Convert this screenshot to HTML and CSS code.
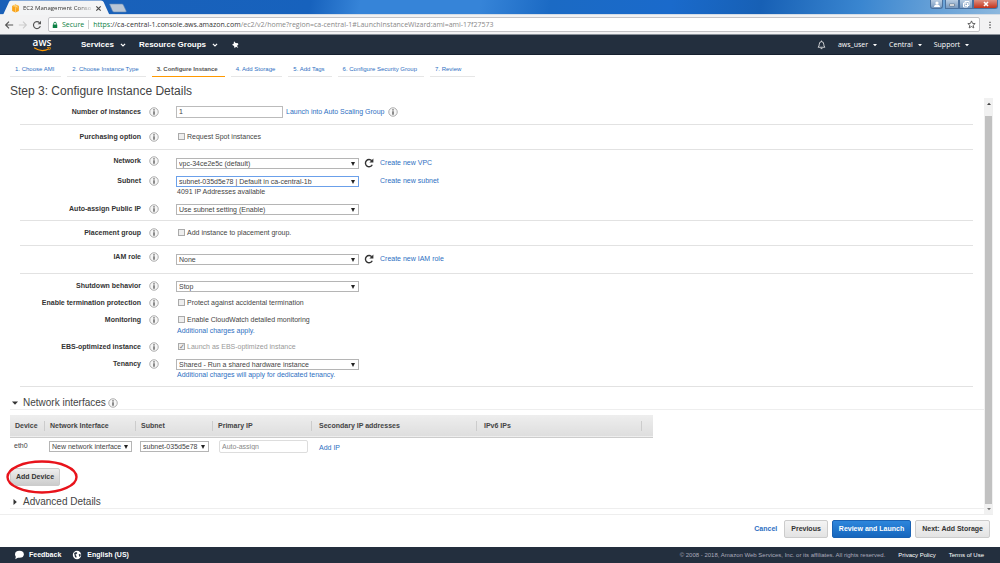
FILE: index.html
```html
<!DOCTYPE html>
<html lang="en">
<head>
<meta charset="utf-8">
<title>EC2 Management Console</title>
<link rel="stylesheet" href="styles.css">
</head>
<body>
<svg class="defs" width="0" height="0" aria-hidden="true">
  <symbol id="info" viewBox="0 0 20 20"><circle cx="10" cy="10" r="8.500" fill="#f6f6f6" stroke="#999" stroke-width="1.600"/><path d="M10 4.600v2.400M10 8.600v7" stroke="#444" stroke-width="2.400"/></symbol>
  <symbol id="reload" viewBox="0 0 20 20"><path d="M16.500 13.600A7.200 7.200 0 1 1 15.600 5.600" fill="none" stroke="#333" stroke-width="2.800"/><path d="M18.800 1v8h-8z" fill="#333"/></symbol>
  <symbol id="chevron" viewBox="0 0 10 10"><path d="M1.500 3l3.500 3.500L8.500 3" fill="none" stroke="#fff" stroke-width="2"/></symbol>
  <symbol id="caret" viewBox="0 0 10 10"><path d="M0 2.500h10L5 8z" fill="currentColor"/></symbol>
</svg>

<div class="tabstrip">
  <svg class="tab-shape" viewBox="0 0 130 15" aria-hidden="true">
    <path d="M3 15L9 2Q9.500 .5 11 .5H101Q103 .5 103.600 2L109.500 15z" fill="#f3f4f5"/>
    <path d="M109.500 4h12.500q1 0 1.400 1l2.800 6q.4 1-.8 1H114q-1 0-1.500-1l-2.600-6q-.4-1-.4-1z" fill="#b9c6d6" stroke="#5f86b5" stroke-width=".6"/>
  </svg>
  <div class="tab">
    <svg class="tab-icon" viewBox="0 0 16 16" aria-hidden="true"><path d="M8 1l6 2.500v9L8 15l-6-2.500v-9z" fill="#f9a41a"/><path d="M8 1l6 2.500L8 6 2 3.500z" fill="#fdc24f"/><path d="M8 6v9M4.800 2.200l6 2.500v3" stroke="#fde3b0" stroke-width="1" fill="none"/></svg>
    <span class="tab-title">EC2 Management Conso</span>
    <button class="tab-close" aria-label="Close tab"><svg viewBox="0 0 8 8"><path d="M1.500 1.500l5 5M6.500 1.500l-5 5" stroke="#444" stroke-width="1.300"/></svg></button>
  </div>
  <div class="win">
    <button class="win-btn win-user" aria-label="Profile"><svg viewBox="0 0 12 8"><circle cx="6" cy="3" r="1.600" fill="#fff"/><path d="M3 7q0-2.500 3-2.500T9 7z" fill="#fff"/></svg></button>
    <button class="win-btn" aria-label="Minimize"><svg viewBox="0 0 12 8"><path d="M3.500 4h5v2h-5z" fill="#fff" stroke="#456" stroke-width=".5"/></svg></button>
    <button class="win-btn" aria-label="Restore"><svg viewBox="0 0 12 8"><path d="M5 1.500h4v4H5zM3.500 3h4v4h-4z" fill="#8aa5c6" stroke="#fff" stroke-width="1"/></svg></button>
    <button class="win-btn win-close" aria-label="Close"><svg viewBox="0 0 12 8"><path d="M4 2l4 4M8 2L4 6" stroke="#fff" stroke-width="1.600"/></svg></button>
  </div>
</div>

<div class="toolbar">
  <button class="tool" aria-label="Back"><svg viewBox="0 0 12 12"><path d="M11 6H2M6 2L2 6l4 4" fill="none" stroke="#555" stroke-width="1.400"/></svg></button>
  <button class="tool" aria-label="Forward"><svg viewBox="0 0 12 12"><path d="M1 6h9M6 2l4 4-4 4" fill="none" stroke="#ccc" stroke-width="1.400"/></svg></button>
  <button class="tool" aria-label="Reload"><svg viewBox="0 0 12 12"><path d="M10 7.300A4.200 4.200 0 1 1 9 3.200" fill="none" stroke="#555" stroke-width="1.400"/><path d="M10.800 1v4H6.800z" fill="#555"/></svg></button>
  <div class="address">
    <svg class="lock" viewBox="0 0 8 10" aria-hidden="true"><path d="M1 4.500h6V9H1z" fill="#0b8043"/><path d="M2.300 5V3a1.700 1.700 0 0 1 3.400 0v2" fill="none" stroke="#0b8043" stroke-width="1.200"/></svg>
    <span class="secure">Secure</span>
    <span class="url"><span class="scheme">https</span><span class="host">://ca-central-1.console.aws.amazon.com</span>/ec2/v2/home?region=ca-central-1#LaunchInstanceWizard:ami=ami-17f27573</span>
    <svg class="star" viewBox="0 0 12 12" aria-hidden="true"><path d="M6 1.200l1.400 3.300 3.500.3-2.700 2.300.9 3.500L6 8.700l-3.100 1.900.9-3.500L1.100 4.800l3.500-.3z" fill="none" stroke="#555" stroke-width="1.200"/></svg>
  </div>
  <button class="tool menu" aria-label="Menu"><svg viewBox="0 0 12 12"><path d="M5.200 2h1.600v1.600H5.200zM5.200 5.200h1.600v1.600H5.200zM5.200 8.400h1.600V10H5.200z" fill="#555"/></svg></button>
</div>

<header class="nav">
  <a class="logo" href="#" aria-label="aws">
    <span>aws</span>
    <svg viewBox="0 0 22 6" aria-hidden="true"><path d="M1 1q9 6 18 1" fill="none" stroke="#f90" stroke-width="1.400"/><path d="M16.500.8q3-1 4 0 .2 1.500-1.300 3" fill="none" stroke="#f90" stroke-width="1"/></svg>
  </a>
  <nav class="nav-main">
    <button class="nav-btn">Services <svg><use href="#chevron"/></svg></button>
    <button class="nav-btn">Resource Groups <svg><use href="#chevron"/></svg></button>
    <button class="pin" aria-label="Pin shortcuts"><svg viewBox="0 0 12 12"><path d="M4.500 .500l2.500 2.500 3.500 .5 .5 2-2 1.500 2 3.500-3.500-2L5.500 11 4.500 7.500 1.500 5.500 4 4z" fill="#fff"/></svg></button>
  </nav>
  <div class="nav-side">
    <button class="bell" aria-label="Alerts"><svg viewBox="0 0 12 13"><path d="M1.500 9.500Q3 8 3 5.500 3 2 6 2t3 3.500q0 2.500 1.500 4zM6 .6V2M4.800 11.300h2.400" fill="none" stroke="#eee" stroke-width="1.100"/></svg></button>
    <button class="side-btn">aws_user <svg><use href="#caret"/></svg></button>
    <button class="side-btn">Central <svg><use href="#caret"/></svg></button>
    <button class="side-btn">Support <svg><use href="#caret"/></svg></button>
  </div>
</header>

<nav class="steps">
  <a href="#">1. Choose AMI</a>
  <a href="#">2. Choose Instance Type</a>
  <a href="#" class="current">3. Configure Instance</a>
  <a href="#">4. Add Storage</a>
  <a href="#">5. Add Tags</a>
  <a href="#">6. Configure Security Group</a>
  <a href="#">7. Review</a>
</nav>
<h1>Step 3: Configure Instance Details</h1>

<main class="pane">
  <div class="content">
    <form class="form">
      <section class="group first">
        <div class="row">
          <label for="count">Number of instances</label><svg class="info"><use href="#info"/></svg>
          <div class="field"><input class="text count" id="count" value="1"><a href="#">Launch into Auto Scaling Group</a><svg class="info"><use href="#info"/></svg></div>
        </div>
      </section>
      <section class="group">
        <div class="row">
          <span class="name">Purchasing option</span><svg class="info"><use href="#info"/></svg>
          <label class="check"><input type="checkbox">Request Spot instances</label>
        </div>
      </section>
      <section class="group network">
        <div class="row low">
          <label for="network">Network</label><svg class="info"><use href="#info"/></svg>
          <div class="field"><span class="select"><select id="network"><option>vpc-34ce2e5c (default)</option></select></span><button type="button" class="refresh" aria-label="Refresh networks"><svg><use href="#reload"/></svg></button><a href="#">Create new VPC</a></div>
        </div>
        <div class="row">
          <label for="subnet">Subnet</label><svg class="info"><use href="#info"/></svg>
          <div class="field"><span class="select focused"><select id="subnet"><option>subnet-035d5e78 | Default in ca-central-1b</option></select></span><span class="refresh"></span><a href="#">Create new subnet</a></div>
          <p class="hint">4091 IP Addresses available</p>
        </div>
        <div class="row">
          <label for="autoip">Auto-assign Public IP</label><svg class="info"><use href="#info"/></svg>
          <div class="field"><span class="select"><select id="autoip"><option>Use subnet setting (Enable)</option></select></span></div>
        </div>
      </section>
      <section class="group">
        <div class="row">
          <span class="name">Placement group</span><svg class="info"><use href="#info"/></svg>
          <label class="check"><input type="checkbox">Add instance to placement group.</label>
        </div>
      </section>
      <section class="group role">
        <div class="row low">
          <label for="iam">IAM role</label><svg class="info"><use href="#info"/></svg>
          <div class="field"><span class="select"><select id="iam"><option>None</option></select></span><button type="button" class="refresh" aria-label="Refresh roles"><svg><use href="#reload"/></svg></button><a href="#">Create new IAM role</a></div>
        </div>
      </section>
      <section class="group tight">
        <div class="row">
          <label for="shutdown">Shutdown behavior</label><svg class="info"><use href="#info"/></svg>
          <div class="field"><span class="select"><select id="shutdown"><option>Stop</option></select></span></div>
        </div>
        <div class="row">
          <span class="name">Enable termination protection</span><svg class="info"><use href="#info"/></svg>
          <label class="check"><input type="checkbox">Protect against accidental termination</label>
        </div>
        <div class="row">
          <span class="name">Monitoring</span><svg class="info"><use href="#info"/></svg>
          <label class="check"><input type="checkbox">Enable CloudWatch detailed monitoring</label>
          <p class="hint"><a href="#">Additional charges apply.</a></p>
        </div>
        <div class="row">
          <span class="name">EBS-optimized instance</span><svg class="info"><use href="#info"/></svg>
          <label class="check off"><input type="checkbox" checked disabled>Launch as EBS-optimized instance</label>
        </div>
        <div class="row">
          <label for="tenancy">Tenancy</label><svg class="info"><use href="#info"/></svg>
          <div class="field"><span class="select"><select id="tenancy"><option>Shared - Run a shared hardware instance</option></select></span></div>
          <p class="hint"><a href="#">Additional charges will apply for dedicated tenancy.</a></p>
        </div>
      </section>
    </form>

    <h2><svg class="twist open"><use href="#caret"/></svg>Network interfaces <svg class="info"><use href="#info"/></svg></h2>
    <table>
      <colgroup><col class="c-device"><col class="c-nic"><col class="c-subnet"><col class="c-primary"><col class="c-ip"><col class="c-ip"><col class="c-end"></colgroup>
      <thead><tr><th>Device</th><th>Network Interface</th><th>Subnet</th><th>Primary IP</th><th>Secondary IP addresses</th><th>IPv6 IPs</th><th></th></tr></thead>
      <tbody><tr>
        <td>eth0</td>
        <td><span class="select cell"><select aria-label="Network interface"><option>New network interface</option></select></span></td>
        <td><span class="select cell"><select aria-label="Subnet"><option>subnet-035d5e78</option></select></span></td>
        <td><input class="text auto" aria-label="Primary IP" placeholder="Auto-assign"></td>
        <td class="add"><a href="#">Add IP</a></td>
        <td></td><td></td>
      </tr></tbody>
    </table>
    <div class="device-wrap">
      <button class="btn device">Add Device</button>
      <svg class="ring" viewBox="0 0 72 34" aria-hidden="true"><ellipse cx="36" cy="17" rx="34.500" ry="15.500" fill="none" stroke="#e8131b" stroke-width="2.400"/></svg>
    </div>
    <h2 class="last"><svg class="twist"><use href="#caret"/></svg>Advanced Details</h2>
  </div>
  <div class="scroll" aria-hidden="true">
    <svg class="up"><use href="#caret"/></svg>
    <div class="thumb"></div>
    <svg><use href="#caret"/></svg>
  </div>
</main>

<div class="actions">
  <a href="#">Cancel</a>
  <button class="btn">Previous</button>
  <button class="btn primary">Review and Launch</button>
  <button class="btn">Next: Add Storage</button>
</div>

<footer class="footer">
  <a class="foot-main" href="#"><svg viewBox="0 0 12 12" aria-hidden="true"><ellipse cx="6.500" cy="5.200" rx="5.300" ry="4.200" fill="#fff"/><path d="M2.500 7l-1 4 4.500-2.500z" fill="#fff"/></svg>Feedback</a>
  <a class="foot-main" href="#"><svg viewBox="0 0 12 12" aria-hidden="true"><circle cx="6" cy="6" r="5" fill="#fff"/><path d="M2.500 3.500l2.500-1 1.500 1L5 5 4 5.500 5.500 7.500 5 9.500 3.500 8zM8 5.500l2-1 .5 2L9 8.500z" fill="#232f3e"/></svg>English (US)</a>
  <span class="copy">© 2008 - 2018, Amazon Web Services, Inc. or its affiliates. All rights reserved.</span>
  <a href="#">Privacy Policy</a>
  <a href="#">Terms of Use</a>
</footer>
</body>
</html>
```
FILE: styles.css
```css
* { box-sizing: border-box; }
html, body { height: 100%; }
body {
  margin: 0;
  display: flex;
  flex-direction: column;
  min-height: 100vh;
  background: #fff;
  color: #444;
  font: 7px/12px "Liberation Sans", Arial, sans-serif;
}
.defs { position: absolute; }
button, input, select { font: inherit; color: inherit; }
button { border: 0; padding: 0; background: none; }
a { color: #2e6fc2; text-decoration: none; }
svg { display: block; flex: none; }
h1, h2, p { margin: 0; font-weight: normal; }

/* Browser frame */
.tabstrip {
  position: relative;
  flex: none;
  display: flex;
  justify-content: space-between;
  height: 15px;
  background: linear-gradient(100deg, #1a60b8 0, #1762bd 31%, #3684d8 36%, #3684d8 48%, #1b6ac4 55%, #1a6acb 67%, #1760b5 76%, #3a86d0 86%, #8db8de 100%);
  border-bottom: 1px solid #d5dde6;
}
.tab-shape { position: absolute; left: 0; top: 0; width: 130px; height: 15px; }
.tab { position: relative; display: flex; align-items: center; width: 102px; padding: 2px 0 0 11px; color: #333; font: 6px/12px "Open Sans", sans-serif; }
.tab-icon { width: 9px; height: 9px; margin-right: 3px; }
.tab-title { flex: 1; white-space: nowrap; -webkit-mask-image: linear-gradient(90deg, #000 75%, transparent); mask-image: linear-gradient(90deg, #000 75%, transparent); }
.tab-close svg { width: 7px; height: 7px; }
.win { display: flex; align-items: flex-start; padding-right: 2px; }
.win-btn { width: 14px; height: 9px; border: 1px solid #4a719f; border-top: 0; background: linear-gradient(#b7cce2, #7899bf); }
.win-btn svg { width: 12px; height: 8px; }
.win-user { width: 13px; margin-right: 2px; border-radius: 0 0 3px 3px; }
.win-close { width: 25px; background: linear-gradient(#dd8f80, #c4341c); border-radius: 0 0 3px 0; }
.win-close svg { margin: 0 auto; }
.toolbar { flex: none; display: flex; align-items: center; height: 20px; padding: 0 3px 0 2px; background: #f2f2f3; border-bottom: 1px solid #8c939b; }
.tool { width: 14px; height: 12px; }
.tool svg { width: 10px; height: 10px; margin: 0 auto; }
.toolbar .menu { margin-left: 3px; }
.address { flex: 1; display: flex; align-items: center; height: 15px; margin-left: 4px; padding: 0 3px; background: #fff; border: 1px solid #c3c3c6; border-radius: 2px; font: 7px/12px "Open Sans", sans-serif; white-space: nowrap; }
.lock { width: 6px; height: 8px; margin-right: 4px; }
.secure { padding-right: 4px; margin-right: 4px; border-right: 1px solid #d0d0d0; line-height: 9px; color: #0b8043; }
.url { flex: 1; color: #888; }
.scheme { color: #0b8043; }
.host { color: #333; }
.star { width: 9px; height: 9px; }

/* Console navigation */
.nav { flex: none; display: flex; align-items: center; height: 20px; padding: 0 31px 0 32px; background: #232f3e; border-bottom: 1px solid #16202e; color: #fff; }
.logo { color: #fff; width: 20px; font: 600 10px/9px "Open Sans", sans-serif; text-align: center; }
.logo svg { width: 21px; height: 5px; }
.nav-main { display: flex; align-items: center; margin-left: 29px; font-weight: bold; font-size: 8px; }
.nav-btn, .side-btn { display: flex; align-items: center; white-space: nowrap; }
.nav-btn { margin-right: 13px; }
.nav-btn svg { width: 6px; height: 6px; margin-left: 6px; }
.pin svg { width: 8px; height: 8px; }
.nav-side { display: flex; align-items: center; margin-left: auto; font: 7px/12px "Open Sans", sans-serif; gap: 12px; }
.bell svg { width: 9px; height: 10px; }
.side-btn svg { width: 4px; height: 4px; margin-left: 5px; }

/* Wizard steps */
.steps { flex: none; display: flex; gap: 6px; padding: 8px 10px 0; font-size: 6px; }
.steps a { padding: 0 7px 1px 5px; border-bottom: 1px solid #e6e6e6; white-space: nowrap; }
.steps a:last-child { padding-right: 14px; }
.steps .current { color: #555; font-weight: bold; border-color: #f90; }
h1 { flex: none; padding: 7px 10px 0; font-size: 12px; line-height: 14px; color: #444; }

/* Scrolling pane */
.pane { flex: 1; min-height: 0; display: flex; margin-right: 7px; border-bottom: 1px solid #eee; }
.content { flex: 1; min-width: 0; padding-left: 10px; overflow: hidden; }
.scroll { display: flex; flex-direction: column; align-items: center; width: 9px; background: #f1f1f1; color: #777; }
.scroll svg { width: 4px; height: 4px; margin: 3px 0; }
.scroll .up { margin: 4px 0 10px; transform: rotate(180deg); color: #444; }
.thumb { flex: 1; width: 7px; background: #c1c1c1; }

/* Form */
.form { padding: 0 11px 0 10px; }
.group { display: grid; gap: 6px; padding: 6px 0; border-bottom: 1px solid #e2e2e2; }
.group.first { padding-top: 8px; }
.group.network { padding: 5px 0; }
.group.role { padding: 5px 0 8px; }
.group.tight { gap: 5px; }
.row { display: grid; grid-template-columns: 121px 10px 1fr; column-gap: 8px; align-items: center; }
.row > label:first-child, .name { text-align: right; font-weight: bold; color: #333; }
.info { width: 10px; height: 10px; }
.field { display: flex; align-items: center; margin-left: 9px; }
.low { align-items: start; }
.low .info { margin-top: 1px; }
.low .field { margin-top: 2px; }
.hint { grid-column: 3; margin-left: 10px; line-height: 10px; }
.text { height: 12px; padding: 0 2px; border: 1px solid #bbb; background: #fff; outline: 0; }
.count { width: 107px; margin-right: 3px; }
.field .info { margin-left: 4px; }
.select { position: relative; display: block; width: 183px; border: 1px solid #b5b5b5; background: #fff; }
.select::after { content: ""; position: absolute; right: 3px; top: 3px; border: 2px solid transparent; border-top: 4px solid #222; border-bottom: 0; pointer-events: none; }
.select select { display: block; width: 100%; height: 9px; line-height: 9px; padding: 0 8px 0 2px; border: 0; background: none; appearance: none; outline: 0; }
.focused { border-color: #6ba0ea; }
.refresh { width: 10px; margin: 0 6px 0 5px; }
.refresh svg { width: 10px; height: 10px; }
.check { display: flex; align-items: center; margin-left: 11px; }
.check input { appearance: none; display: grid; place-items: center; width: 7px; height: 7px; margin: 0 2px 1px 0; border: 1px solid #aaa; background: #eee; }
.check input:checked::after { content: "✓"; font: bold 7px/7px "DejaVu Sans", sans-serif; color: #777; }
.check.off { color: #999; }

/* Network interfaces */
h2 { display: flex; align-items: center; height: 13px; margin-top: 10px; border-bottom: 1px solid #eee; font-size: 10px; color: #444; }
h2 .info { margin-left: 2px; }
.twist { width: 6px; height: 6px; margin: 0 5px 0 2px; color: #333; transform: rotate(-90deg); }
.twist.open { transform: none; }
table { table-layout: fixed; width: 643px; margin-top: 5px; border-collapse: collapse; }
.c-device { width: 35px; }
.c-nic { width: 91px; }
.c-subnet { width: 77px; }
.c-primary { width: 99px; }
.c-ip { width: 165px; }
.c-end { width: 11px; }
thead tr { background: linear-gradient(#eee, #dedede); border-bottom: 1px solid #ccc; }
th { height: 22px; padding: 0 5px; text-align: left; color: #444; background: linear-gradient(#ccc, #ccc) right center / 1px 10px no-repeat; }
th:last-child { background: none; }
th:nth-child(n+5) { padding-left: 7px; }
td { height: 18px; padding: 0 4px; }
.cell { width: auto; }
.auto { display: block; width: 89px; height: 13px; margin-left: 2px; border-color: #ddd; border-radius: 2px; line-height: 11px; }
.auto::placeholder { color: #888; line-height: 11px; }
td.add { padding: 4px 7px 0; }
.device-wrap { position: relative; margin-top: 13px; display: flex; }
.ring { position: absolute; left: -4px; top: -8px; width: 72px; height: 34px; }
.last { margin-top: 10px; }

/* Buttons */
.btn { height: 18px; padding: 0 6px; border: 1px solid #ccc; border-radius: 2px; background: linear-gradient(#f4f4f4, #e3e3e3); color: #333; font-weight: bold; }
.btn.device { padding: 0 5px; background: linear-gradient(#eee, #ccc); }
.btn.primary { background: linear-gradient(#2d86dc, #1666bd); border-color: #1a62b3; color: #fff; }
.actions { flex: none; display: flex; align-items: center; justify-content: flex-end; gap: 4px; padding: 5px 10px 9px; font-weight: bold; }
.actions a { margin-right: 3px; }

.footer { flex: none; display: flex; align-items: center; height: 16px; padding: 0 16px 0 14px; background: #232f3e; color: #aab; font-size: 6px; }
.footer a { color: #fff; margin-left: 13px; }
.footer .foot-main { display: flex; align-items: center; margin: 0 11px 0 0; font-size: 7px; font-weight: bold; }
.foot-main svg { width: 10px; height: 10px; margin-right: 5px; }
.copy { margin-left: auto; }
```
